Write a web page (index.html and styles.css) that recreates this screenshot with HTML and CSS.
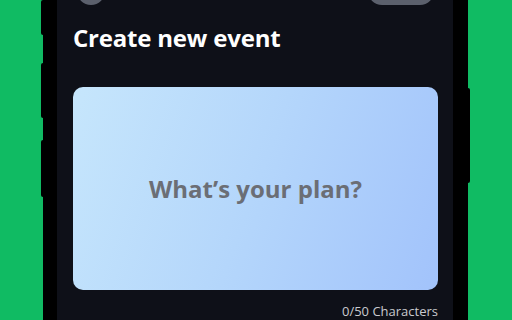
FILE: index.html
```html
<!DOCTYPE html>
<html>
<head>
<meta charset="utf-8">
<link rel="stylesheet" href="styles.css">
</head>
<body>
<div class="stage">
  <div class="phone">
    <span class="btn btn-l1"></span>
    <span class="btn btn-l2"></span>
    <span class="btn btn-l3"></span>
    <span class="btn btn-r1"></span>
    <div class="screen">
      <div class="topbar">
        <span class="circle"></span>
        <span class="pill"></span>
      </div>
      <h1 class="title">Create new event</h1>
      <div class="card">
        <span class="placeholder">What’s your plan?</span>
      </div>
      <div class="counter">0/50 Characters</div>
    </div>
  </div>
</div>
</body>
</html>
```
FILE: styles.css
```css
html, body {
  margin: 0;
  padding: 0;
  width: 512px;
  height: 320px;
  overflow: hidden;
  background: #10bb63;
}
.stage {
  padding-left: 43px;
}
.phone {
  position: relative;
  width: 396px;
  margin-top: -40px;
  background: #000;
  border-left: 14px solid #000;
  border-right: 15px solid #000;
  height: 420px;
}
.btn {
  position: absolute;
  width: 4px;
  background: #000;
  border-radius: 2px;
}
.btn-l1 { left: -16px; top: 40px; height: 35px; }
.btn-l2 { left: -16px; top: 103px; height: 55px; }
.btn-l3 { left: -16px; top: 180px; height: 57px; }
.btn-r1 { right: -17px; top: 128px; height: 95px; }
.screen {
  background: #0e1018;
  height: 100%;
  padding: 0 15px 0 16px;
  font-family: "Open Sans", "Noto Sans", sans-serif;
}
.topbar {
  display: flex;
  justify-content: space-between;
  align-items: flex-end;
  padding: 17px 4px 0 4px;
  height: 28px;
}
.circle {
  width: 28px;
  height: 28px;
  border-radius: 50%;
  background: #5b606c;
}
.pill {
  width: 66px;
  height: 28px;
  border-radius: 14px;
  background: #5b606c;
}
.title {
  margin: 17px 0 0 0;
  color: #fff;
  font-size: 24px;
  font-weight: 700;
  line-height: 32px;
  letter-spacing: -0.2px;
}
.card {
  margin-top: 33px;
  height: 203px;
  border-radius: 10px;
  background: linear-gradient(110deg, #c6e6fc 0%, #b4d6fb 50%, #a2c3fb 100%);
  display: flex;
  align-items: center;
  justify-content: center;
}
.placeholder {
  color: #6b6e75;
  font-size: 24px;
  font-weight: 700;
}
.counter {
  margin-top: 13px;
  text-align: right;
  color: #c9cacf;
  font-size: 13px;
  line-height: 17px;
}
```
